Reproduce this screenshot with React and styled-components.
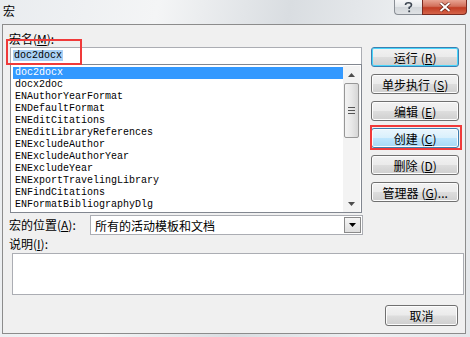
import React from 'react';
import styled, {createGlobalStyle, css} from "styled-components";

const GlobalStyle = createGlobalStyle`
    html, body {
        margin: 0;
        padding: 0;
        background: #dfe3e8;
    }
    * {
        box-sizing: border-box;
    }
`

const cjk = `"Noto Sans CJK SC", "Liberation Sans", sans-serif`;

const Window = styled.div`
    width: 470px;
    height: 337px;
    display: flex;
    flex-direction: column;
    background: linear-gradient(100deg, #e9ecef 0%, #f4f5f6 30%, #d9dde1 55%, #eef0f2 80%, #e4e7ea 100%);
    font-family: ${cjk};
    font-size: 12px;
    color: #000;
    overflow: hidden;
`

const TitleBar = styled.div`
    height: 24px;
    flex: none;
    display: flex;
    align-items: flex-start;
    justify-content: space-between;
    padding: 0 3px 0 3px;
`

const Title = styled.span`
    margin-top: 3px;
    font-size: 12px;
    line-height: 16px;
`

const Caption = styled.div`
    display: flex;
`

const CaptionBtn = styled.div`
    height: 15px;
    display: flex;
    align-items: center;
    justify-content: center;
    border: 1px solid #8a8f96;
    border-top: none;
    ${p => p.$close ? css`
        width: 45px;
        border-radius: 0 0 4px 0;
        border-color: #7a2a20;
        background: linear-gradient(#e8a493 0%, #d2705b 45%, #c13d24 55%, #d5644a 100%);
    ` : css`
        width: 28px;
        border-right: none;
        border-radius: 0 0 0 4px;
        background: linear-gradient(#f7f8f9 0%, #e3e6e9 50%, #d3d7db 51%, #dfe2e5 100%);
    `}
`

const Body = styled.div`
    flex: 1;
    margin: 0 4px 3px 2px;
    border: 1px solid #8c8c8c;
    background: #f0f0f0;
    padding: 6px 6px 0 6px;
    display: flex;
    flex-direction: column;
`

const Top = styled.div`
    display: flex;
    gap: 9px;
`

const LeftCol = styled.div`
    width: 354px;
    display: flex;
    flex-direction: column;
`

const Label = styled.div`
    height: 16px;
    line-height: 15px;
    font-size: 12px;
    white-space: nowrap;
`

const Highlight = styled.div`
    position: relative;
`

const RedBox = styled.div`
    position: absolute;
    border: 2px solid #f03a3a;
    pointer-events: none;
    ${p => css`
        left: ${p.$l}px;
        top: ${p.$t}px;
        width: ${p.$w}px;
        height: ${p.$h}px;
    `}
`

const Input = styled.div`
    height: 17px;
    margin-left: 1px;
    border: 1px solid #abadb3;
    border-bottom: none;
    background: #fff;
    padding: 1px 2px;
    font-family: "Liberation Mono", monospace;
    font-size: 10px;
    line-height: 14px;
`

const Selected = styled.span`
    background: #a9d0f5;
    padding: 0 1px;
`

const ListBox = styled.div`
    height: 149px;
    margin-left: 1px;
    border: 1px solid #828790;
    background: #fff;
    display: flex;
    padding: 2px 1px 1px 2px;
`

const Items = styled.div`
    flex: 1;
    display: flex;
    flex-direction: column;
`

const Item = styled.div`
    height: 12px;
    line-height: 12px;
    padding-left: 2px;
    font-family: "Liberation Mono", monospace;
    font-size: 10px;
    white-space: nowrap;
    ${p => p.$active && css`
        background: #3399ff;
        color: #fff;
    `}
`

const ScrollBar = styled.div`
    width: 17px;
    display: flex;
    flex-direction: column;
    align-items: center;
    background: #f3f3f3;
    margin: -1px 0 -1px 0;
`

const Arrow = styled.div`
    height: 17px;
    width: 17px;
    display: flex;
    align-items: center;
    justify-content: center;
`

const Thumb = styled.div`
    width: 15px;
    height: 55px;
    border: 1px solid #979797;
    border-radius: 2px;
    background: linear-gradient(90deg, #f3f3f3 0%, #e8e8e8 50%, #d6d6d6 100%);
    display: flex;
    flex-direction: column;
    align-items: center;
    justify-content: center;
    gap: 2px;
`

const Grip = styled.div`
    width: 7px;
    height: 1px;
    background: #555;
`

const RightCol = styled.div`
    width: 88px;
    display: flex;
    flex-direction: column;
    gap: 7px;
    padding-top: 16px;
`

const Button = styled.div`
    height: 20px;
    border: 1px solid #707070;
    border-radius: 3px;
    display: flex;
    align-items: center;
    justify-content: center;
    font-size: 12px;
    white-space: nowrap;
    background: linear-gradient(#f2f2f2 0%, #ebebeb 48%, #dddddd 52%, #cfcfcf 100%);
    box-shadow: inset 0 0 0 1px #fcfcfc;
    ${p => p.$default && css`
        border-color: #3c7fb1;
        box-shadow: inset 0 0 0 1px #48d5fb;
    `}
    ${p => p.$hot && css`
        border-color: #3c7fb1;
        background: linear-gradient(#eaf6fd 0%, #d9f0fc 48%, #bee6fd 52%, #a7d9f5 100%);
    `}
`

const Mnem = styled.span`
    text-decoration: underline;
    text-underline-offset: 1px;
`

const Key = styled.span`
    margin-left: 3px;
`

const LocationRow = styled.div`
    display: flex;
    align-items: center;
    margin-top: 2px;
    height: 20px;
`

const LocationLabel = styled(Label)`
    width: 81px;
    flex: none;
`

const Combo = styled.div`
    width: 273px;
    height: 20px;
    border: 1px solid #abadb3;
    background: #fff;
    display: flex;
    align-items: center;
    padding: 1px 1px 1px 4px;
    font-size: 12px;
`

const ComboText = styled.div`
    flex: 1;
`

const ComboBtn = styled.div`
    width: 17px;
    height: 16px;
    border: 1px solid #8a8a8a;
    background: linear-gradient(#f5f5f5, #dedede);
    display: flex;
    align-items: center;
    justify-content: center;
`

const DescLabel = styled(Label)`
    margin-top: 1px;
`

const DescBox = styled.div`
    height: 42px;
    margin: 1px 0 0 3px;
    width: 452px;
    border: 1px solid #abadb3;
    background: #fff;
`

const Footer = styled.div`
    display: flex;
    justify-content: flex-end;
    padding-right: 1px;
    margin-top: 10px;
`

const CancelButton = styled(Button)`
    width: 73px;
    height: 21px;
`

const macros = [
    'doc2docx',
    'docx2doc',
    'ENAuthorYearFormat',
    'ENDefaultFormat',
    'ENEditCitations',
    'ENEditLibraryReferences',
    'ENExcludeAuthor',
    'ENExcludeAuthorYear',
    'ENExcludeYear',
    'ENExportTravelingLibrary',
    'ENFindCitations',
    'ENFormatBibliographyDlg',
];

const buttons = [
    {text: '运行', key: 'R', def: true},
    {text: '单步执行', key: 'S'},
    {text: '编辑', key: 'E'},
    {text: '创建', key: 'C', hot: true},
    {text: '删除', key: 'D'},
    {text: '管理器', key: 'G', more: true},
];

function DialogButton(props) {
    const {data} = props;

    const btn = (
        <Button $default={data.def} $hot={data.hot}>
            {data.text}<Key>(<Mnem>{data.key}</Mnem>){data.more ? '...' : ''}</Key>
        </Button>
    );

    if(data.hot) {
        return (
            <Highlight>
                {btn}
                <RedBox $l={-1} $t={-3} $w={92} $h={25}/>
            </Highlight>
        )
    }
    return btn;
}

function App() {
    return (
        <Window>
            <GlobalStyle/>
            <TitleBar>
                <Title>宏</Title>
                <Caption>
                    <CaptionBtn>
                        <svg width="9" height="11" viewBox="0 0 9 11">
                            <path d="M1.5 3 Q1.5 0.8 4.5 0.8 Q7.5 0.8 7.5 3 Q7.5 4.6 5.2 5.4 L5.2 7" fill="none" stroke="#3b4450" strokeWidth="1.6"/>
                            <rect x="4.3" y="8.4" width="1.8" height="1.8" fill="#3b4450"/>
                        </svg>
                    </CaptionBtn>
                    <CaptionBtn $close>
                        <svg width="12" height="10" viewBox="0 0 12 10">
                            <path d="M1.5 1 L10.5 9 M10.5 1 L1.5 9" stroke="#5a1a10" strokeWidth="3.2"/>
                            <path d="M1.5 1 L10.5 9 M10.5 1 L1.5 9" stroke="#fff" strokeWidth="2"/>
                        </svg>
                    </CaptionBtn>
                </Caption>
            </TitleBar>
            <Body>
                <Top>
                    <LeftCol>
                        <Label>宏名(<Mnem>M</Mnem>):</Label>
                        <Highlight>
                            <Input><Selected>doc2docx</Selected></Input>
                            <RedBox $l={-3} $t={-8} $w={76} $h={26}/>
                        </Highlight>
                        <ListBox>
                            <Items>
                                {macros.map((m, i) => (
                                    <Item key={m} $active={i === 0}>{m}</Item>
                                ))}
                            </Items>
                            <ScrollBar>
                                <Arrow>
                                    <svg width="7" height="4" viewBox="0 0 7 4"><path d="M0 4 L7 4 L3.5 0 Z" fill="#4d4d4d"/></svg>
                                </Arrow>
                                <Thumb>
                                    <Grip/><Grip/><Grip/>
                                </Thumb>
                                <div style={{flex: 1}}/>
                                <Arrow>
                                    <svg width="7" height="4" viewBox="0 0 7 4"><path d="M0 0 L7 0 L3.5 4 Z" fill="#4d4d4d"/></svg>
                                </Arrow>
                            </ScrollBar>
                        </ListBox>
                    </LeftCol>
                    <RightCol>
                        {buttons.map(b => (
                            <DialogButton key={b.key} data={b}/>
                        ))}
                    </RightCol>
                </Top>
                <LocationRow>
                    <LocationLabel>宏的位置(<Mnem>A</Mnem>):</LocationLabel>
                    <Combo>
                        <ComboText>所有的活动模板和文档</ComboText>
                        <ComboBtn>
                            <svg width="7" height="4" viewBox="0 0 7 4">
                                <path d="M0 0 L7 0 L3.5 4 Z" fill="#000"/>
                            </svg>
                        </ComboBtn>
                    </Combo>
                </LocationRow>
                <DescLabel>说明(<Mnem>I</Mnem>):</DescLabel>
                <DescBox/>
                <Footer>
                    <CancelButton>取消</CancelButton>
                </Footer>
            </Body>
        </Window>
    );
}

export default App;
